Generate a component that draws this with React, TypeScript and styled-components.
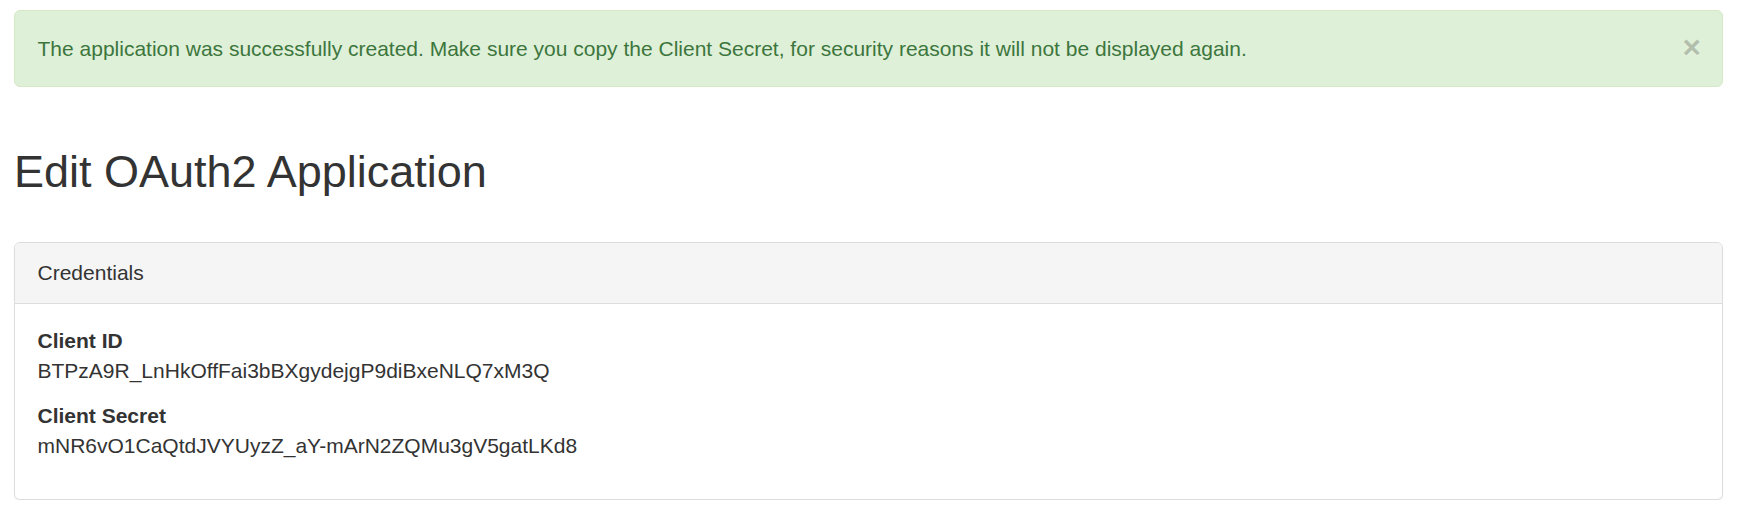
import React from "react";
import styled, { createGlobalStyle } from "styled-components";

const GlobalStyle = createGlobalStyle`
  html, body {
    margin: 0;
    padding: 0;
    background: #ffffff;
  }
  body {
    font-family: "Liberation Sans", Arial, Helvetica, sans-serif;
    font-size: 21px;
    line-height: 30px;
    color: #333333;
  }
  * { box-sizing: border-box; }
`;

const Page = styled.div`
  padding: 10px 19px 0 14px;
`;

const Alert = styled.div`
  display: flex;
  align-items: flex-start;
  padding: 22.5px 21px 22.5px 22.5px;
  background: #dff0d8;
  border: 1px solid #d6e9c6;
  border-radius: 6px;
  color: #3c763d;
`;

const AlertText = styled.div`
  flex: 1;
`;

const CloseButton = styled.button`
  position: relative;
  top: -2px;
  height: 30px;
  padding: 0;
  margin: 0;
  border: 0;
  background: transparent;
  cursor: pointer;
  font-family: "Liberation Sans", Arial, sans-serif;
  font-size: 31.5px;
  font-weight: 700;
  line-height: 1;
  color: #000;
  opacity: 0.2;
  text-shadow: 0 1.5px 0 #fff;
`;

const Title = styled.h2`
  margin: 60px 0 45px;
  font-size: 45px;
  font-weight: 500;
  line-height: 1.1;
  color: #333333;
`;

const Panel = styled.section`
  border: 1px solid #dddddd;
  border-radius: 6px;
  background: #ffffff;
  box-shadow: 0 1.5px 1.5px rgba(0, 0, 0, 0.05);
`;

const PanelHeading = styled.div`
  padding: 15px 22.5px;
  background: #f5f5f5;
  border-bottom: 1px solid #dddddd;
  border-radius: 5px 5px 0 0;
  color: #333333;
`;

const PanelBody = styled.div`
  padding: 22.5px;
`;

const FieldLabel = styled.strong`
  display: block;
  font-weight: 700;
`;

const FieldValue = styled.p`
  margin: 0 0 15px;
`;

const fields = [
  { label: "Client ID", value: "BTPzA9R_LnHkOffFai3bBXgydejgP9diBxeNLQ7xM3Q" },
  { label: "Client Secret", value: "mNR6vO1CaQtdJVYUyzZ_aY-mArN2ZQMu3gV5gatLKd8" },
];

export default function App() {
  return (
    <>
      <GlobalStyle />
      <Page>
        <Alert role="alert">
          <AlertText>
            The application was successfully created. Make sure you copy the Client Secret, for
            security reasons it will not be displayed again.
          </AlertText>
          <CloseButton type="button" aria-label="Close">
            ×
          </CloseButton>
        </Alert>
        <Title>Edit OAuth2 Application</Title>
        <Panel>
          <PanelHeading>Credentials</PanelHeading>
          <PanelBody>
            {fields.map((f) => (
              <div key={f.label}>
                <FieldLabel>{f.label}</FieldLabel>
                <FieldValue>{f.value}</FieldValue>
              </div>
            ))}
          </PanelBody>
        </Panel>
      </Page>
    </>
  );
}
